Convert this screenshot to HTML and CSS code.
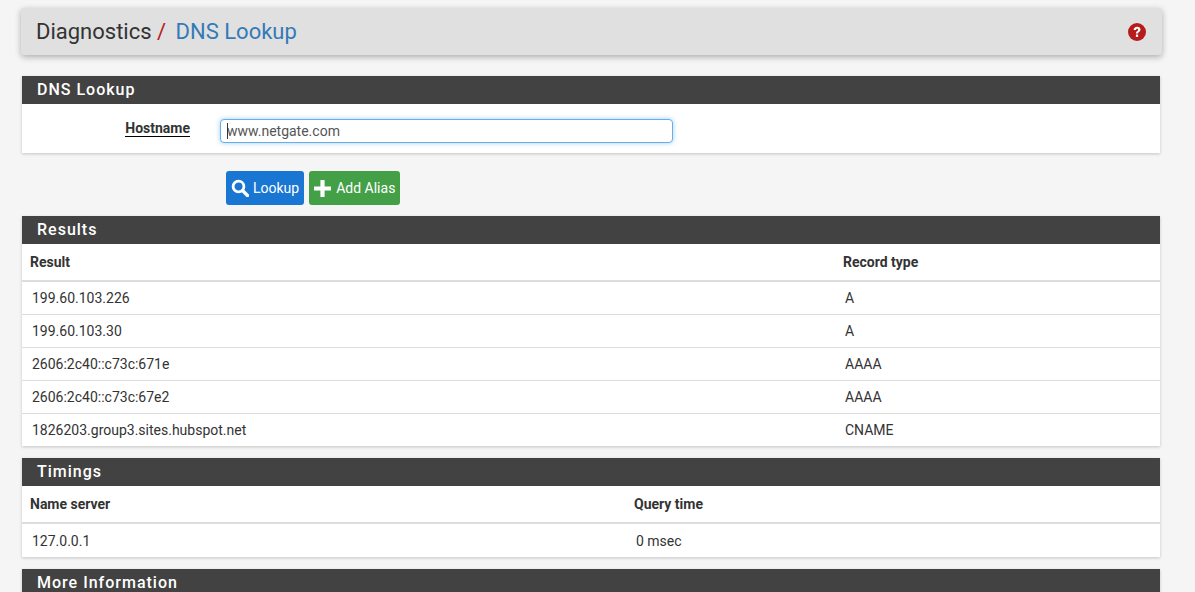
FILE: index.html
```html
<!DOCTYPE html>
<html lang="en">
<head>
  <meta charset="UTF-8">
  <title>Diagnostics: DNS Lookup</title>
  <link rel="stylesheet" href="styles.css">
</head>
<body>
  <div class="container">
    <div class="page-header">
      <h1 class="crumbs">Diagnostics <span class="slash">/</span> <a class="crumb-link" href="#">DNS Lookup</a></h1>
      <a class="help" href="#" aria-label="Help">
        <svg viewBox="0 0 18 18" width="18" height="18">
          <circle cx="9" cy="9" r="9" fill="#b71c1c"/>
          <path d="M5.6 7c.1-2 1.600-3.300 3.500-3.300 2 0 3.400 1.200 3.400 2.900 0 1.300-.7 2-1.600 2.600-.7.500-.9.700-.9 1.300H7.900c0-1.300.4-1.900 1.400-2.600.6-.4.900-.7.900-1.200s-.4-.9-1-.9c-.7 0-1.100.5-1.200 1.200z" fill="#fff"/>
          <rect x="7.900" y="11.500" width="2.200" height="2.400" fill="#fff"/>
        </svg>
      </a>
    </div>

    <div class="panel">
      <h2 class="panel-title">DNS Lookup</h2>
      <div class="form-row">
        <label class="form-label" for="host"><span>Hostname</span></label>
        <div class="form-input">
          <input id="host" type="text" value="www.netgate.com">
          <span class="caret"></span>
        </div>
      </div>
    </div>

    <div class="actions">
      <a class="btn btn-blue" href="#">
        <svg viewBox="0 0 18 18" width="18" height="18"><circle cx="7.500" cy="7.500" r="5.400" fill="none" stroke="#fff" stroke-width="2.800"/><path d="M11.500 11.500l5 5" stroke="#fff" stroke-width="3.400" stroke-linecap="round"/></svg>
        Lookup
      </a>
      <a class="btn btn-green" href="#">
        <svg viewBox="0 0 17 17" width="17" height="17"><path d="M8.500 1v15M1 8.500h15" stroke="#fff" stroke-width="4.200" stroke-linecap="round"/></svg>
        Add Alias
      </a>
    </div>

    <div class="panel">
      <h2 class="panel-title">Results</h2>
      <table class="data results">
        <thead>
          <tr><th>Result</th><th>Record type</th></tr>
        </thead>
        <tbody>
          <tr><td>199.60.103.226</td><td>A</td></tr>
          <tr><td>199.60.103.30</td><td>A</td></tr>
          <tr><td>2606:2c40::c73c:671e</td><td>AAAA</td></tr>
          <tr><td>2606:2c40::c73c:67e2</td><td>AAAA</td></tr>
          <tr><td>1826203.group3.sites.hubspot.net</td><td>CNAME</td></tr>
        </tbody>
      </table>
    </div>

    <div class="panel">
      <h2 class="panel-title">Timings</h2>
      <table class="data timings">
        <thead>
          <tr><th>Name server</th><th>Query time</th></tr>
        </thead>
        <tbody>
          <tr><td>127.0.0.1</td><td>0 msec</td></tr>
        </tbody>
      </table>
    </div>

    <div class="panel">
      <h2 class="panel-title">More Information</h2>
    </div>
  </div>
</body>
</html>
```

FILE: styles.css
```css
html, body {
  margin: 0;
  height: 592px;
  overflow: hidden;
}

body {
  background: #f5f5f5;
  font-family: Roboto, sans-serif;
  font-size: 14px;
  color: #333;
}

.container {
  padding: 8px 35px 0 22px;
}

.page-header {
  display: flex;
  justify-content: space-between;
  align-items: center;
  height: 47px;
  margin: 0 -2px 21px -1px;
  padding: 0 16px 0 15px;
  background: #e0e0e0;
  border-radius: 3px;
  box-shadow: 0 2px 6px rgba(0, 0, 0, 0.3);
}

.crumbs {
  margin: 0;
  font-size: 22px;
  font-weight: 400;
  color: #333;
}

.slash {
  color: #b71c1c;
  margin-right: 4px;
}

.crumb-link {
  color: #337ab7;
  text-decoration: none;
}

.help {
  display: flex;
}

.panel {
  background: #fff;
  margin-bottom: 12px;
  box-shadow: 0 1px 3px rgba(0, 0, 0, 0.2);
}

.panel-title {
  margin: 0;
  height: 28px;
  padding-left: 15px;
  background: #424242;
  color: #fff;
  font-size: 16px;
  font-weight: 500;
  line-height: 28px;
  letter-spacing: 1px;
}

.form-row {
  display: flex;
  align-items: center;
  height: 49px;
}

.form-label {
  width: 168px;
  margin-top: -2px;
  text-align: right;
  font-weight: 700;
  font-size: 14px;
  color: #333;
}

.form-label span {
  border-bottom: 1px solid #000;
}

.form-input {
  position: relative;
  margin-left: 30px;
  margin-top: 4px;
}

.form-input input {
  display: block;
  box-sizing: border-box;
  width: 453px;
  height: 24px;
  padding: 0 6px;
  border: 1px solid #66afe9;
  border-radius: 4px;
  outline: none;
  box-shadow: 0 0 5px rgba(102, 175, 233, 0.6);
  font-family: Roboto, sans-serif;
  font-size: 14px;
  color: #555;
}

.caret {
  position: absolute;
  left: 7px;
  top: 4px;
  width: 1px;
  height: 16px;
  background: #333;
}

.actions {
  display: flex;
  gap: 5px;
  margin: 18px 0 11px 204px;
}

.btn {
  display: flex;
  align-items: center;
  gap: 4px;
  height: 34px;
  padding: 0 5px;
  border-radius: 3px;
  color: #fff;
  font-size: 14px;
  text-decoration: none;
}

.btn-blue {
  background: #1976d2;
}

.btn-green {
  gap: 5px;
  background: #43a047;
}

.data {
  width: 100%;
  border-collapse: collapse;
  table-layout: fixed;
}

.results th:first-child {
  width: 797px;
}

.timings th:first-child {
  width: 588px;
}

.data th {
  height: 36px;
  padding: 0 8px;
  border-bottom: 2px solid #ddd;
  text-align: left;
  font-size: 14px;
  font-weight: 700;
}

.data td {
  height: 32px;
  padding: 0 10px;
  border-top: 1px solid #ddd;
  font-size: 14px;
}

.timings td {
  height: 33px;
}

.data thead + tbody tr:first-child td {
  border-top: 0;
}
```
